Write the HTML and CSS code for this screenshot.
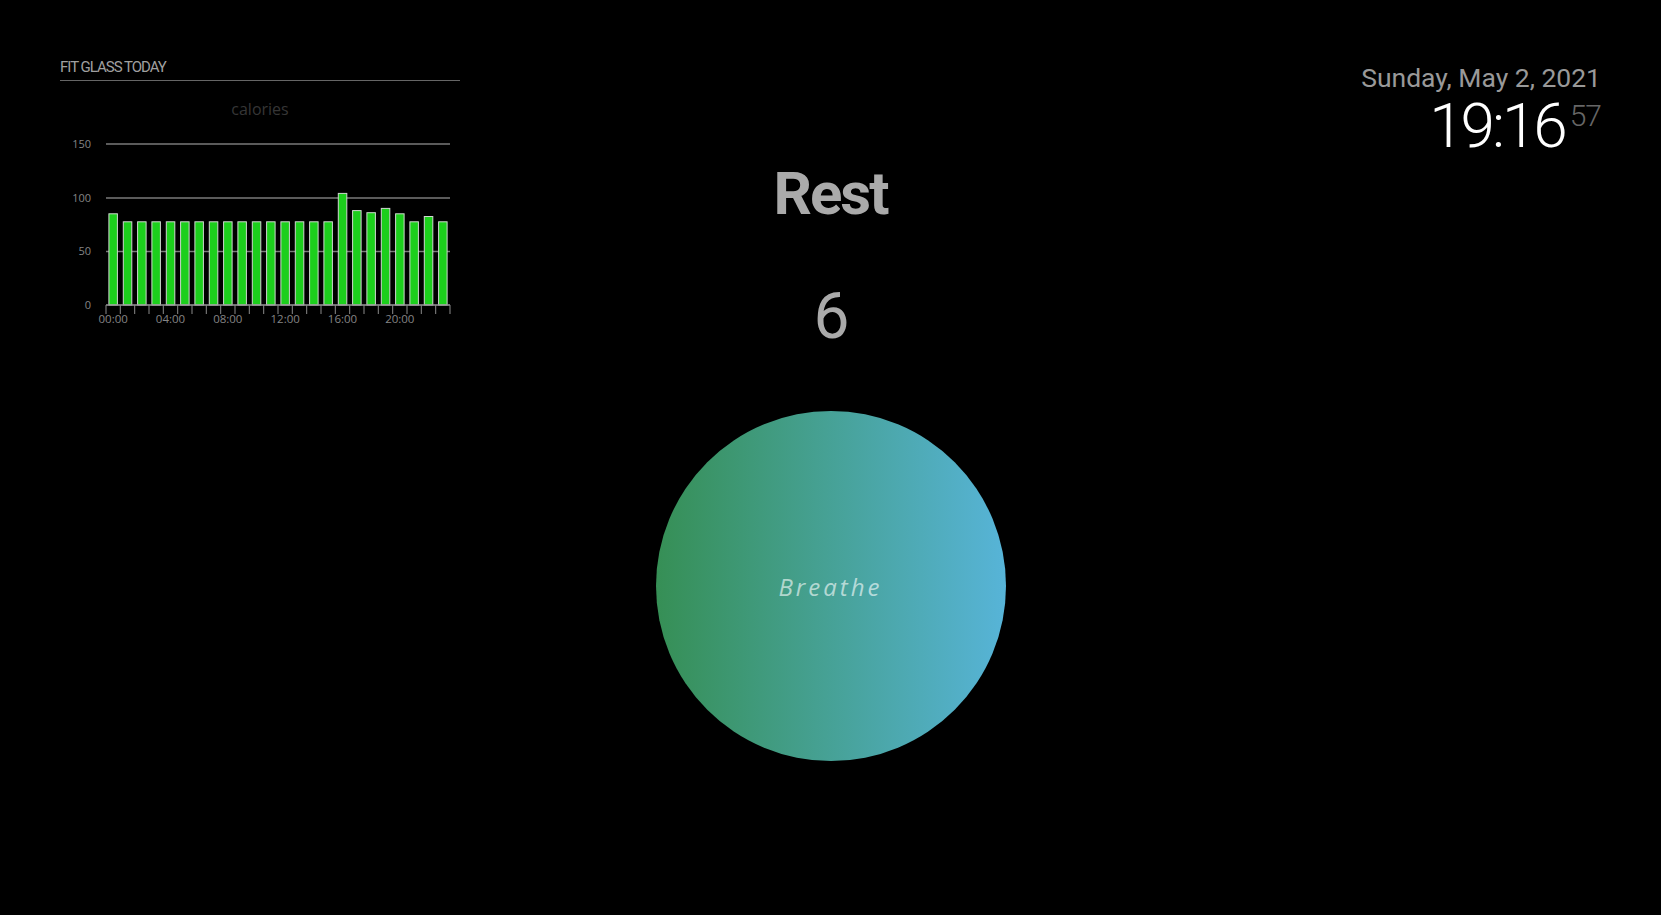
FILE: index.html
```html
<!DOCTYPE html>
<html lang="en">
<head>
    <meta charset="UTF-8">
    <meta name="viewport" content="width=device-width, initial-scale=1.0">
    <title>MagicMirror</title>
    <link rel="stylesheet" href="styles.css">
</head>
<body>
    <div class="mirror">

        <div class="region region-left">
            <header class="module-header">Fit Glass Today</header>
            <svg class="chart" width="400" height="250" viewBox="0 0 400 250">
                <text class="chart-title" x="200" y="24" text-anchor="middle">calories</text>

                <!-- grid -->
                <line class="grid" x1="46" y1="53" x2="390" y2="53"/>
                <line class="grid" x1="46" y1="107" x2="390" y2="107"/>
                <line class="grid" x1="46" y1="160.5" x2="390" y2="160.5"/>

                <text class="y-label" x="31" y="57" text-anchor="end">150</text>
                <text class="y-label" x="31" y="111" text-anchor="end">100</text>
                <text class="y-label" x="31" y="164" text-anchor="end">50</text>
                <text class="y-label" x="31" y="218" text-anchor="end">0</text>

                <!-- bars -->
                <g class="bars">
                    <rect x="48.9" y="122.8" width="8.5" height="91.2"/>
                    <rect x="63.3" y="130.8" width="8.5" height="83.2"/>
                    <rect x="77.6" y="130.8" width="8.5" height="83.2"/>
                    <rect x="91.9" y="130.8" width="8.5" height="83.2"/>
                    <rect x="106.3" y="130.8" width="8.5" height="83.2"/>
                    <rect x="120.6" y="130.8" width="8.5" height="83.2"/>
                    <rect x="134.9" y="130.8" width="8.5" height="83.2"/>
                    <rect x="149.3" y="130.8" width="8.5" height="83.2"/>
                    <rect x="163.6" y="130.8" width="8.5" height="83.2"/>
                    <rect x="177.9" y="130.8" width="8.5" height="83.2"/>
                    <rect x="192.3" y="130.8" width="8.5" height="83.2"/>
                    <rect x="206.6" y="130.8" width="8.5" height="83.2"/>
                    <rect x="220.9" y="130.8" width="8.5" height="83.2"/>
                    <rect x="235.3" y="130.8" width="8.5" height="83.2"/>
                    <rect x="249.6" y="130.8" width="8.5" height="83.2"/>
                    <rect x="263.9" y="130.8" width="8.5" height="83.2"/>
                    <rect x="278.3" y="102.4" width="8.5" height="111.6"/>
                    <rect x="292.6" y="119.6" width="8.5" height="94.4"/>
                    <rect x="306.9" y="121.7" width="8.5" height="92.3"/>
                    <rect x="321.3" y="117.4" width="8.5" height="96.6"/>
                    <rect x="335.6" y="122.8" width="8.5" height="91.2"/>
                    <rect x="349.9" y="130.8" width="8.5" height="83.2"/>
                    <rect x="364.3" y="125.5" width="8.5" height="88.5"/>
                    <rect x="378.6" y="130.8" width="8.5" height="83.2"/>
                </g>

                <!-- x axis -->
                <line class="axis" x1="46" y1="214" x2="390" y2="214"/>
                <path class="ticks" d="M46 214v9M60.3 214v9M74.7 214v9M89 214v9M103.3 214v9M117.7 214v9M132 214v9M146.3 214v9M160.7 214v9M175 214v9M189.3 214v9M203.7 214v9M218 214v9M232.3 214v9M246.7 214v9M261 214v9M275.3 214v9M289.7 214v9M304 214v9M318.3 214v9M332.7 214v9M347 214v9M361.3 214v9M375.7 214v9M390 214v9"/>

                <text class="x-label" x="53.2" y="232" text-anchor="middle">00:00</text>
                <text class="x-label" x="110.5" y="232" text-anchor="middle">04:00</text>
                <text class="x-label" x="167.8" y="232" text-anchor="middle">08:00</text>
                <text class="x-label" x="225.2" y="232" text-anchor="middle">12:00</text>
                <text class="x-label" x="282.5" y="232" text-anchor="middle">16:00</text>
                <text class="x-label" x="339.8" y="232" text-anchor="middle">20:00</text>
            </svg>
        </div>

        <div class="region region-center">
            <div class="breath-phase">Rest</div>
            <div class="breath-count">6</div>
            <div class="breath-circle">
                <span>Breathe</span>
            </div>
        </div>

        <div class="region region-right">
            <div class="clock">
                <div class="date">Sunday, May 2, 2021</div>
                <div class="time">19:16<span class="seconds">57</span></div>
            </div>
        </div>

    </div>
</body>
</html>
```

FILE: styles.css
```css
html, body {
    margin: 0;
    height: 100%;
}
body {
    background-color: #000;
    color: #aaa;
    font-family: Roboto, "Noto Sans", sans-serif;
    overflow: hidden;
}
.mirror {
    box-sizing: border-box;
    height: 100%;
    padding: 60px;
    display: grid;
    grid-template-columns: 1fr auto 1fr;
    align-items: start;
}

/* left: fit glass chart */
.region-left {
    width: 400px;
}
.module-header {
    font-size: 15px;
    line-height: 15px;
    text-transform: uppercase;
    color: #a0a0a0;
    letter-spacing: -1px;
    padding-bottom: 5px;
    border-bottom: 1px solid #666;
    margin-bottom: 10px;
}
.chart {
    display: block;
    font-family: "Open Sans", sans-serif;
}
.chart-title {
    font-size: 16px;
    fill: #363636;
}
.grid {
    stroke: #7a7a7a;
    stroke-width: 1.5;
}
.axis {
    stroke: #9a9a9a;
    stroke-width: 1.5;
}
.ticks {
    stroke: #8a8a8a;
    stroke-width: 1;
}
.y-label,
.x-label {
    font-size: 11px;
    fill: #858585;
}
.x-label {
    font-size: 11.5px;
}
.bars rect {
    fill: #1ccf1c;
    stroke: #cfd8cf;
    stroke-width: 1;
}

/* center: breathing exercise */
.region-center {
    display: flex;
    flex-direction: column;
    align-items: center;
}
.breath-phase {
    margin-top: 104px;
    font-size: 60px;
    line-height: 60px;
    font-weight: 700;
    letter-spacing: -2px;
    color: #aaa;
}
.breath-count {
    margin-top: 61px;
    font-size: 64px;
    line-height: 64px;
    font-weight: 400;
    letter-spacing: -2px;
    color: #aaa;
}
.breath-circle {
    margin-top: 62px;
    width: 350px;
    height: 350px;
    border-radius: 50%;
    background: linear-gradient(to right, #368f55, #57b4d8);
    display: flex;
    align-items: center;
    justify-content: center;
}
.breath-circle span {
    font-family: "Open Sans", sans-serif;
    font-style: italic;
    font-size: 24px;
    letter-spacing: 3px;
    color: rgba(255, 255, 255, 0.6);
}

/* right: clock */
.region-right {
    justify-self: end;
}
.clock {
    text-align: right;
}
.date {
    font-size: 26.5px;
    line-height: 36px;
    color: #999;
}
.time {
    font-size: 62px;
    line-height: 60px;
    font-weight: 300;
    letter-spacing: -3px;
    color: #fff;
}
.seconds {
    font-size: 30px;
    line-height: 40px;
    vertical-align: top;
    letter-spacing: -1px;
    margin-left: 5px;
    color: #666;
}
```
